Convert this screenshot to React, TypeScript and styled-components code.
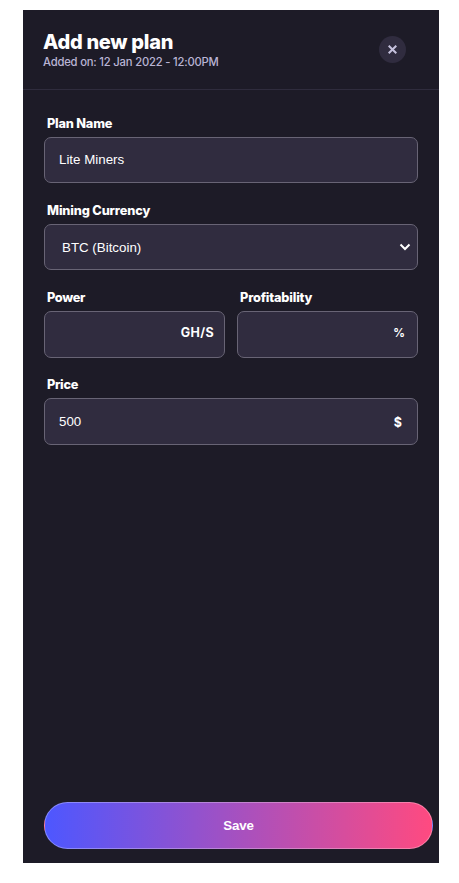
import React from "react";
import styled, { createGlobalStyle } from "styled-components";

const GlobalStyle = createGlobalStyle`
  * { box-sizing: border-box; }
  body { margin: 0; background: #fff; }
`;

const Panel = styled.form`
  width: 416px;
  height: 853px;
  margin: 10px 0 0 23px;
  display: flex;
  flex-direction: column;
  background: #1d1b27;
  color: #fff;
  font-family: Inter, sans-serif;
`;

const Header = styled.header`
  height: 80px;
  padding: 20px 33px 0 20px;
  display: flex;
  justify-content: space-between;
  align-items: flex-start;
  border-bottom: 1px solid #2f2c3d;
`;

const Title = styled.h1`
  margin: 0;
  font-size: 20px;
  line-height: 24px;
  font-weight: 800;
  letter-spacing: -0.3px;
`;

const Subtitle = styled.p`
  margin: 0;
  font-size: 11.25px;
  line-height: 16px;
  font-weight: 500;
  letter-spacing: -0.2px;
  color: #b9b4d4;
`;

const CloseButton = styled.button`
  width: 27px;
  height: 27px;
  margin-top: 6px;
  padding: 0;
  display: grid;
  place-items: center;
  border: 0;
  border-radius: 50%;
  background: #302c3f;
  color: #c5c1dd;
`;

const Fields = styled.div`
  flex: 1;
  padding: 24px 21px 0;
  display: flex;
  flex-direction: column;
`;

const Row = styled.div`
  display: grid;
  grid-template-columns: repeat(2, minmax(0, 1fr));
  column-gap: 12px;
`;

const Field = styled.label`
  height: 87px;
  display: flex;
  flex-direction: column;
`;

const Caption = styled.span<{ $spacing: number }>`
  height: 23px;
  padding-left: 3px;
  font-size: 12.75px;
  line-height: 20px;
  font-weight: 800;
  letter-spacing: ${(p) => p.$spacing}px;
`;

const Control = styled.span<{ $height: number; $end: number }>`
  height: ${(p) => p.$height}px;
  padding: 0 ${(p) => p.$end}px 0 14px;
  display: flex;
  align-items: center;
  border: 1px solid #686475;
  border-radius: 7px;
  background: #302c3f;
`;

const Input = styled.input`
  flex: 1;
  width: 100%;
  min-width: 0;
  padding: 0 0 1px;
  border: 0;
  outline: 0;
  background: transparent;
  color: #fff;
  font: 13.33px "Liberation Sans", Arial, sans-serif;
`;

const Select = styled.select`
  flex: 1;
  min-width: 0;
  padding: 0 0 0 3px;
  border: 0;
  outline: 0;
  appearance: none;
  background: transparent;
  color: #fff;
  font: 13.33px "Liberation Sans", Arial, sans-serif;
`;

const Unit = styled.span<{ $drop?: number; $size: number; $spacing?: number }>`
  padding-top: ${(p) => p.$drop ?? 0}px;
  padding-bottom: 4px;
  font-size: ${(p) => p.$size}px;
  line-height: 16px;
  font-weight: 700;
  letter-spacing: ${(p) => p.$spacing ?? 0}px;
`;

const Footer = styled.footer`
  padding: 0 6px 14px 21px;
  display: flex;
`;

const SaveButton = styled.button`
  flex: 1;
  height: 47px;
  padding: 0;
  border: 1px solid rgba(255, 255, 255, 0.3);
  border-radius: 24px;
  background: linear-gradient(90deg, #4d57ff, #ff4a80);
  color: #fff;
  font: 700 13.33px "Liberation Sans", Arial, sans-serif;
  letter-spacing: -0.2px;
`;

export default function App() {
  return (
    <>
      <GlobalStyle />
      <Panel onSubmit={(e) => e.preventDefault()}>
        <Header>
          <div>
            <Title>Add new plan</Title>
            <Subtitle>Added on: 12 Jan 2022 - 12:00PM</Subtitle>
          </div>
          <CloseButton type="button" aria-label="Close">
            <svg width="9" height="9" viewBox="0 0 9 9" fill="none" stroke="currentColor" strokeWidth="2">
              <path d="M0.7 0.7 8.3 8.3M8.3 0.7 0.7 8.3" />
            </svg>
          </CloseButton>
        </Header>
        <Fields>
          <Field>
            <Caption $spacing={-0.2}>Plan Name</Caption>
            <Control $height={46} $end={14}>
              <Input defaultValue="Lite Miners" />
            </Control>
          </Field>
          <Field>
            <Caption $spacing={-0.15}>Mining Currency</Caption>
            <Control $height={46} $end={6}>
              <Select defaultValue="btc">
                <option value="btc">BTC (Bitcoin)</option>
              </Select>
              <svg width="12" height="8" viewBox="0 0 12 8" fill="none" stroke="#fff" strokeWidth="2">
                <path d="M1.5 1.5 6 6 10.5 1.5" />
              </svg>
            </Control>
          </Field>
          <Row>
            <Field>
              <Caption $spacing={-0.35}>Power</Caption>
              <Control $height={47} $end={10}>
                <Input />
                <Unit $size={12.5} $spacing={0.4}>GH/S</Unit>
              </Control>
            </Field>
            <Field>
              <Caption $spacing={-0.18}>Profitability</Caption>
              <Control $height={47} $end={12}>
                <Input />
                <Unit $size={11.5}>%</Unit>
              </Control>
            </Field>
          </Row>
          <Field>
            <Caption $spacing={-0.3}>Price</Caption>
            <Control $height={47} $end={15}>
              <Input defaultValue="500" />
              <Unit $size={12.5} $drop={6}>$</Unit>
            </Control>
          </Field>
        </Fields>
        <Footer>
          <SaveButton type="submit">Save</SaveButton>
        </Footer>
      </Panel>
    </>
  );
}
